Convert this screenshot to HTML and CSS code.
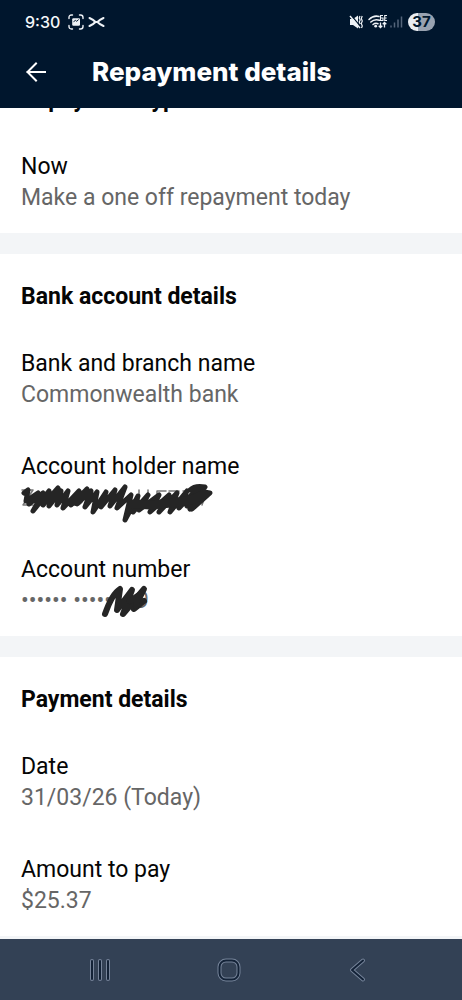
FILE: index.html
```html
<!DOCTYPE html>
<html lang="en">
<head>
<meta charset="utf-8">
<meta name="viewport" content="width=device-width, initial-scale=1">
<title>Repayment details</title>
<link rel="stylesheet" href="styles.css">
</head>
<body>
<div class="screen">
  <header class="header">
    <div class="status">
      <span class="clock">9:30</span>
      <svg class="status-left" width="38" height="16" viewBox="0 0 38 16" fill="none" stroke="#eef2f6" aria-hidden="true">
        <path d="M1 4.500V3.500Q1 1 3.500 1H4.500M11.500 1H12.500Q15 1 15 3.500V4.500M15 11.500V12.500Q15 15 12.500 15H11.500M4.500 15H3.500Q1 15 1 12.500V11.500" stroke-width="1.400" stroke-linecap="round"/>
        <rect x="4.200" y="4.200" width="7.800" height="7.600" rx="1.200" fill="#eef2f6" stroke="none"/>
        <path d="M5.500 7.700L7.500 6.400L8.700 7.300L10.700 5.500" stroke="#00162d" stroke-width="1"/>
        <path d="M21.500 4Q25.500 5.800 27.500 8Q25.500 10.200 21.500 12M35.500 4Q31.500 5.800 29.500 8Q31.500 10.200 35.500 12M26.500 8H30.500" stroke-width="2" stroke-linecap="round"/>
      </svg>
      <svg class="status-right" width="54" height="16" viewBox="0 0 54 16" fill="none" stroke="#eef2f6" aria-hidden="true">
        <path d="M1 5H4L9 1.500V14.500L4 11H1Z" fill="#eef2f6" stroke="none"/>
        <path d="M1.800 1L11.500 12.500" stroke="#00162d" stroke-width="1.300"/>
        <path d="M1 2L11 14" stroke-width="1.400"/>
        <path d="M11 2L10.200 4L11.200 6L10.200 8L11.200 10M13.200 2L12.300 4.500L13.300 7L12.300 9.500L13.300 12L12.500 14" stroke-width="1.200"/>
        <path d="M20 5.500Q24.500 1 30 2.500M21.800 8Q25.500 4.600 30.500 6.200M24 10.500Q26.500 8.600 29 9.800" stroke-width="1.500" stroke-linecap="round"/>
        <circle cx="26.700" cy="12.200" r="1.400" fill="#eef2f6" stroke="none"/>
        <path d="M34 1.500H31.500V6.500H34V4H31.500M38 1.500H35.700V6.500H38M35.700 4H37.600" stroke-width="1.100"/>
        <path d="M31.500 8.500V13.500M29.700 11.700L31.500 13.500L33.300 11.700M35.500 13.500V8.500M33.700 10.300L35.500 8.500L37.300 10.300" stroke-width="1.300"/>
        <path d="M42 13.500V11.500M45.500 13.500V8.500M49 13.500V5.500M52.500 13.500V2.500" stroke="#53647a" stroke-width="1.500"/>
      </svg>
      <span class="battery">37</span>
    </div>
    <div class="titlebar">
      <button class="back" type="button" aria-label="Back">
        <svg width="22" height="22" viewBox="0 0 22 22" fill="none" stroke="#fff" stroke-width="2" stroke-linecap="square" aria-hidden="true"><path d="M20 11H2.500M11 2.500L2.500 11L11 19.500"/></svg>
      </button>
      <h1 class="title">Repayment details</h1>
    </div>
  </header>

  <main class="content">
    <section class="section">
      <h2 class="heading">Repayment type</h2>
      <dl class="list">
        <div><dt>Now</dt><dd>Make a one off repayment today</dd></div>
      </dl>
    </section>
    <section class="section">
      <h2 class="heading">Bank account details</h2>
      <dl class="list">
        <div><dt>Bank and branch name</dt><dd>Commonwealth bank</dd></div>
        <div>
          <dt>Account holder name</dt>
          <dd class="hidden-value">
            <svg class="scribble" width="194" height="44" viewBox="0 0 194 44" fill="none" stroke-linecap="round" stroke-linejoin="round" role="img" aria-label="Hidden">
              <path d="M1 9H12L2 24H12M39 9V23M52 24Q58 25 61 21M80 24L84 21M118 9V24M127 9V24M136 24V10H145M148 10H158L149 24M162 10H171M186 10L181 24" stroke="#777" stroke-width="1.500"/>
              <path d="M3 12L7 9L5 20L17 12L8 23L22 12L12 30L28 10L22 24L37 7L28 25L40 10L36 24L47 10L42 27L58 10L50 24L66 8L56 23L70 10L64 26L76 11L72 31L85 11L80 26L94 9L89 25L104 6L96 27L110 14L104 39L117 15L112 31L127 14L118 29L138 14L129 31L148 14L138 31L156 12L149 31L166 10L158 27L176 8L166 25L184 6Q174 4 169 9L189 12L171 28L183 16L169 28" stroke="#252525" stroke-width="5"/>
              <path d="M112 23L130 24L150 22L170 19L184 13" stroke="#252525" stroke-width="9"/>
            </svg>
          </dd>
        </div>
        <div>
          <dt>Account number</dt>
          <dd class="hidden-value"><span class="digits"><span>•••••• •••••</span><span>9</span></span>
            <svg class="scribble scribble-number" width="48" height="36" viewBox="0 0 48 36" fill="none" stroke="#252525" stroke-width="6" stroke-linecap="round" stroke-linejoin="round" aria-hidden="true"><path d="M4 30Q11 10 19 5L16 26L31 6L22 30L43 5L33 25L43 17"/><path d="M29 17L38 11L35 22"/></svg>
          </dd>
        </div>
      </dl>
    </section>
    <section class="section">
      <h2 class="heading">Payment details</h2>
      <dl class="list">
        <div><dt>Date</dt><dd>31/03/26 (Today)</dd></div>
        <div><dt>Amount to pay</dt><dd>$25.37</dd></div>
      </dl>
    </section>
  </main>

  <nav class="navbar" aria-label="System">
    <button type="button" aria-label="Recent apps">
      <svg width="26" height="26" viewBox="0 0 26 26" fill="none" stroke-linecap="round" aria-hidden="true"><path class="rim" d="M5 4V22M13 4V22M21 4V22"/><path class="core" d="M5 4V22M13 4V22M21 4V22"/></svg>
    </button>
    <button type="button" aria-label="Home">
      <svg width="26" height="26" viewBox="0 0 26 26" fill="none" aria-hidden="true"><rect class="rim" x="3.500" y="3.500" width="19" height="19" rx="6.500"/><rect class="core" x="3.500" y="3.500" width="19" height="19" rx="6.500"/></svg>
    </button>
    <button type="button" aria-label="Back">
      <svg width="26" height="26" viewBox="0 0 26 26" fill="none" stroke-linecap="round" stroke-linejoin="round" aria-hidden="true"><path class="rim" d="M18 3.500L7 13L18 22.500"/><path class="core" d="M18 3.500L7 13L18 22.500"/></svg>
    </button>
  </nav>
</div>
</body>
</html>
```
FILE: styles.css
```css
* { box-sizing: border-box; }
body {
  margin: 0;
  background: #fff;
  color: #050505;
  font-family: Roboto, "Liberation Sans", sans-serif;
}
h1, h2, dl, dt, dd { margin: 0; }
button { border: 0; padding: 0; background: none; }
svg { display: block; flex: none; }
.screen { min-height: 100vh; display: flex; flex-direction: column; }

.header {
  position: relative;
  z-index: 1;
  height: 108px;
  background: #00162d;
  color: #fff;
}
.status {
  display: flex;
  align-items: center;
  height: 43px;
  padding: 0 27px 0 25px;
}
.clock { font: 500 16px/20px Inter, sans-serif; color: #f4f7fa; }
.status-left { margin-left: 8px; }
.status-right { margin-left: auto; }
.battery {
  margin-left: 5px;
  width: 27px;
  border-radius: 9px;
  background: linear-gradient(90deg, #e9edf2 37%, #98a2b0 37%);
  color: #00162d;
  font: 700 15px/18px Inter, sans-serif;
  text-align: center;
}
.titlebar { display: flex; align-items: center; height: 58px; padding-left: 25px; }
.back { margin-right: 45px; }
.title { font: 800 26px/30px Inter, sans-serif; }

/* The list is scrolled, so its first heading runs under the header. */
.content { flex: 1; margin-top: -51px; }
.section { padding: 27px 21px 20px; }
.section + .section { border-top: 21px solid #f3f5f7; }
.heading { margin-bottom: 36px; font-size: 23px; line-height: 31px; font-weight: 700; }
.list { display: flex; flex-direction: column; gap: 41px; font-size: 23px; line-height: 31px; }
dd { color: #666; }
.hidden-value { position: relative; min-height: 31px; }
.digits { display: flex; justify-content: space-between; width: 128px; }
.scribble { position: absolute; left: 0; top: -1px; }
.scribble-number { left: 80px; }

.navbar {
  display: flex;
  align-items: center;
  justify-content: space-between;
  height: 64px;
  padding: 0 91px 0 87px;
  border-top: 3px solid #f3f5f7;
  background: #334155;
}
.rim { stroke: #76849a; stroke-width: 4; }
.core { stroke: #132237; stroke-width: 2; }
```
